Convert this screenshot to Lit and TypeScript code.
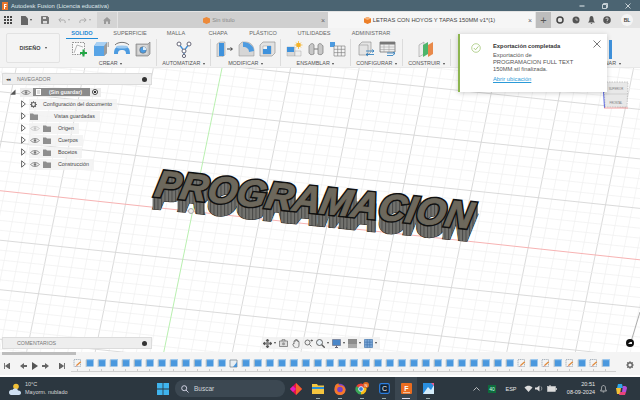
import { LitElement, html, css, svg } from "lit";
import { customElement } from "lit/decorators.js";

const S = (w: number, h: number, body: unknown) =>
  html`<svg class="ic" width=${w} height=${h} viewBox="0 0 ${w} ${h}">${body}</svg>`;

const eye = (on = true) =>
  S(10, 7, svg`<path d="M.7 3.500C2.500 1 7.500 1 9.300 3.500 7.500 6 2.500 6 .7 3.500Z" fill="none" stroke=${on ? "#777" : "#c4c4c4"} stroke-width=".9"/><circle cx="5" cy="3.500" r="1.300" fill=${on ? "#777" : "#c4c4c4"}/>`);
const folder = () =>
  S(8, 7, svg`<path d="M0 .5h3l1 1h4v5.500H0Z" fill="#8f8f8f"/>`);
const gear = (size = 8, c = "#666") =>
  S(size, size, svg`<g transform="scale(${size / 8})"><circle cx="4" cy="4" r="2.300" fill="none" stroke=${c} stroke-width="1.400"/><path d="M4 .2v1.300M4 6.500v1.300M.2 4h1.300M6.500 4h1.300M1.300 1.300l1 1M5.700 5.700l1 1M6.700 1.300l-1 1M2.300 5.700l-1 1" stroke=${c} stroke-width="1.200"/></g>`);
const tri = () =>
  S(5, 8, svg`<path d="M.6.8 4.300 4 .6 7.200Z" fill="#fff" stroke="#444" stroke-width=".8"/>`);

const cube = () =>
  S(9, 10, svg`<path d="M2 1h6.500v7.500H2Z" fill="#4a98de"/><path d="M.7 2 2 1v7.500L.7 9.200Z" fill="#a9bccb"/><path d="M2 1h6.500V2.200H2Z" fill="#9cc8ee"/>`);
const whiteCube = () =>
  S(9, 10, svg`<path d="M1 2h7v7H1Z" fill="#e8eef3" stroke="#7d8a94" stroke-width=".8"/><path d="M4 9 8 4v5Z" fill="#4a94d8"/>`);
const sketchIc = () =>
  S(9, 10, svg`<path d="M1 1.500h6.500v7H1Z" fill="#f4f4f4" stroke="#8a9aa8" stroke-width=".7" stroke-dasharray="1.200 .6"/><path d="M3.500 7.500 7.800 3.800" stroke="#e08a3a" stroke-width="1.200"/><path d="M3 8.500l1-.4-.6-.6Z" fill="#d23"/>`);

const TOOL = {
  sketch: S(18, 16, svg`<path d="M1.500 1.500h12v12h-12Z" fill="#fafafa" stroke="#666" stroke-width=".7" stroke-dasharray="1.500 1"/><path d="M3 12 6 4l6 2" fill="none" stroke="#8a8a8a" stroke-width=".6"/><path d="M12.500 8.500v7M9 12h7" stroke="#22a745" stroke-width="2"/>`),
  extrude: S(16, 16, svg`<path d="M1 5 4 1h10v11l-3 3H1Z" fill="#58a4e6"/><path d="M11 15V5l3-4v11Z" fill="#9c9c9c"/><path d="M1 5h10l3-4H4Z" fill="#a8d0f3"/><path d="M15.200 1v5" stroke="#555" stroke-width=".6"/>`),
  revolve: S(18, 16, svg`<path d="M1 13c0-7 3-8 8-8s8 1 8 8h-4c0-3-1-4-4-4s-4 1-4 4Z" fill="#4d9be0"/><path d="M2 4c3-3.500 11-3.500 14 0" fill="none" stroke="#555" stroke-width=".8"/><ellipse cx="9" cy="6" rx="6" ry="1.600" fill="#9cc9ef"/>`),
  hole: S(16, 16, svg`<path d="M1 3h12l2-2v12l-2 2H1Z" fill="#bdbdbd" stroke="#777" stroke-width=".6"/><path d="M2.500 4h10v9.500h-10Z" fill="#d8d8d8"/><circle cx="8" cy="9" r="3.300" fill="#4d9be0" stroke="#666" stroke-width=".6"/><path d="M8 9h3.300A3.300 3.300 0 0 0 8 5.700Z" fill="#d8ecfa"/>`),
  auto: S(16, 17, svg`<path d="M3 3l5 7 5-7M8 10v5" stroke="#3e8fd8" stroke-width="1.300" fill="none"/><circle cx="3" cy="3" r="2" fill="#fff" stroke="#667" stroke-width="1"/><circle cx="13" cy="3" r="2" fill="#fff" stroke="#667" stroke-width="1"/><circle cx="8" cy="10" r="2" fill="#fff" stroke="#667" stroke-width="1"/><circle cx="8" cy="15" r="1.600" fill="#fff" stroke="#667" stroke-width="1"/>`),
  press: S(18, 16, svg`<path d="M1 3l3-2h5v13l-3 2H1Z" fill="#ddd" stroke="#888" stroke-width=".5"/><path d="M4 1h5v13H4Z" fill="#3f92dc" transform="translate(-1 1)"/><path d="M11 8h5M14.500 6.500 16.500 8l-2 1.500" stroke="#333" stroke-width=".9" fill="none"/>`),
  fillet: S(17, 16, svg`<path d="M1 15V4l3-3h3c6 0 9 4 9 9v5Z" fill="#d6d6d6" stroke="#888" stroke-width=".5"/><path d="M5 1c6 0 11 4 11 9l-5 1c0-3-2-5-6-5Z" fill="#4d9be0"/>`),
  shell: S(17, 16, svg`<path d="M1 4l3-3h12v11l-3 3H1Z" fill="#e2e2e2" stroke="#888" stroke-width=".6"/><path d="M4 5h8v8H4Z" fill="#f4f4f4" stroke="#888" stroke-width=".4"/><path d="M4 8h4V5h4v8H4Z" fill="#3f92dc"/>`),
  comp: S(17, 16, svg`<path d="M1 6h8v9H1Z" fill="#d8d8d8" stroke="#999" stroke-width=".4"/><path d="M1 6h7v5H1Z" fill="#3f92dc"/><path d="M9 10h6v5H9Z" fill="#eee" stroke="#999" stroke-width=".4"/><circle cx="12.500" cy="4" r="2.300" fill="#f5b32a"/><path d="M12.500 0v8M8.500 4h8M10 1.500l5 5M15 1.500l-5 5" stroke="#f5b32a" stroke-width=".7"/>`),
  joint: S(18, 16, svg`<path d="M2 5c2-3 4-3 5-1v9c-2 1-4 1-5-1ZM16 5c-2-3-4-3-5-1v9c2 1 4 1 5-1Z" fill="#c8c8c8" stroke="#777" stroke-width=".7"/><path d="M7 8h4" stroke="#777"/>`),
  table: S(17, 16, svg`<path d="M1 1h5v5H1Z" fill="#4d9be0"/><path d="M5 5h11v10H5ZM5 8.300h11M5 11.600h11M8.700 5v10M12.300 5v10" fill="#f4f4f4" stroke="#777" stroke-width=".6"/>`),
  boxarrow: S(17, 16, svg`<path d="M1 4l3-3h9v10l-3 3H1Z" fill="#e4e4e4" stroke="#888" stroke-width=".6"/><path d="M1 4h9v10" fill="none" stroke="#888" stroke-width=".5"/><path d="M8 10h8M14 8.500 16 10l-2 1.500M8 13.500h8M10 12 8 13.500 10 15" stroke="#2277bb" stroke-width=".8" fill="none"/>`),
  tablearrow: S(17, 16, svg`<path d="M1 1h15v10H1Z" fill="#eee" stroke="#666" stroke-width=".7"/><path d="M1 1h15v2.500H1Z" fill="#777"/><path d="M1 6h15M1 8.500h15M5 3v8M10 3v8" stroke="#999" stroke-width=".5"/><path d="M8 12h8M14 11 16 12.500 14 14M8 14.500h6" stroke="#2277bb" stroke-width=".8" fill="none"/>`),
  planes: S(17, 16, svg`<path d="M1 4l5-3v12l-5 3Z" fill="#ececec" stroke="#888" stroke-width=".5"/><path d="M5 4l5-3v12l-5 3Z" fill="#4cb56a"/><path d="M10 4l5-3v12l-5 3Z" fill="#e8894a"/>`),
  select: S(26, 19, svg`<path d="M23 0h3v19h-3Z" fill="#3f92dc"/>`),
};

const cells = Array.from({ length: 45 }, (_, i) =>
  i === 0 || i === 37 || i === 39 || i === 41 || i === 43 ? "s" : i === 13 ? "w" : "c"
);

const tabs: [string, number, boolean?][] = [
  ["SOLIDO", 32, true], ["SUPERFICIE", 64], ["MALLA", 28], ["CHAPA", 56],
  ["PLÁSTICO", 34], ["UTILIDADES", 68], ["ADMINISTRAR", 46],
];

const groups: [string, number, unknown[], string?][] = [
  ["CREAR", 88, [TOOL.sketch, TOOL.extrude, TOOL.revolve, TOOL.hole], "shift"],
  ["AUTOMATIZAR", 54, [TOOL.auto]],
  ["MODIFICAR", 70, [TOOL.press, TOOL.fillet, TOOL.shell]],
  ["ENSAMBLAR", 70, [TOOL.comp, TOOL.joint, TOOL.table]],
  ["CONFIGURAR", 52, [TOOL.boxarrow, TOOL.tablearrow]],
  ["CONSTRUIR", 48, [TOOL.planes]],
];

const rows: { label: string; kind: "gear" | "saved" | "eye" | "faded" }[] = [
  { label: "Configuración del documento", kind: "gear" },
  { label: "Vistas guardadas", kind: "saved" },
  { label: "Origen", kind: "faded" },
  { label: "Cuerpos", kind: "eye" },
  { label: "Bocetos", kind: "eye" },
  { label: "Construcción", kind: "eye" },
];

function gridLines() {
  const out: unknown[] = [];
  for (let n = -20; n <= 45; n++) {
    const major = n % 5 === 0;
    const x = 222 + (68.6 * n) / 5;
    if (n === 0) continue;
    out.push(svg`<line x1=${x} y1="68" x2=${x - 0.205 * 284} y2="352" stroke=${major ? "#d6d6d6" : "#efefef"} stroke-width=${major ? 0.9 : 0.7}/>`);
  }
  for (let n = -20; n <= 18; n++) {
    const major = n % 5 === 0;
    const y = 190.7 + (49.5 * n) / 5;
    if (n === 0) continue;
    out.push(svg`<line x1="0" y1=${y} x2="640" y2=${y + 0.105 * 640} stroke=${major ? "#d6d6d6" : "#efefef"} stroke-width=${major ? 0.9 : 0.7}/>`);
  }
  return out;
}

const WORD = "PROGRAMACION";
const TM = "matrix(1 0.103 -0.2 1 153.500 196)";
const wordAt = (dy: number) => `translate(0 ${dy}) ${TM}`;
const FONT = { size: 37, len: 317 };

@customElement("app-root")
export class AppRoot extends LitElement {
  static styles = css`
    :host { display: flex; flex-direction: column; width: 640px; height: 400px; overflow: hidden; background: #fff; font-family: "Liberation Sans", Arial, sans-serif; color: #555; }
    .ic { display: block; flex: none; }
    .title { flex: 0 0 11px; background: #4b6472; color: #dfe6ea; font-size: 5.900px; display: flex; align-items: center; padding-left: 2px; }
    .title .txt { margin-left: 3px; }
    .winbtns { margin-left: auto; display: flex; }
    .winbtns .ic { margin: 0 9px 0 8px; }
    .tabs { flex: 0 0 17px; background: #e4e4e4; display: flex; align-items: stretch; padding-top: 1px; box-sizing: border-box; }
    .qa { width: 97px; display: flex; align-items: center; padding-left: 4px; box-sizing: border-box; }
    .qa .ic { margin-left: 9px; }
    .qa .ic:first-child { margin-left: 0; }
    .qa .arrow { margin-left: 2px; }
    .qa .dim { border-top-color: #aaa; }
    .home { width: 20px; background: #d4d4d4; margin-right: 1px; display: flex; align-items: center; justify-content: center; }
    .tab { display: flex; align-items: center; justify-content: center; font-size: 5.800px; position: relative; gap: 2px; box-sizing: border-box; }
    .tab.off { width: 210px; background: #cfcfcf; color: #8a8a8a; padding-right: 8px; }
    .tab.on { width: 207px; background: #f6f6f6; color: #444; padding-right: 4px; }
    .tab .x { position: absolute; right: 3px; font-size: 7px; color: #666; }
    .plus { width: 15px; background: #bdbdbd; display: flex; align-items: center; justify-content: center; color: #555; font-size: 11px; margin-left: 1px; }
    .tabend { flex: 1; display: flex; align-items: center; padding-left: 5px; gap: 8px; }
    .avatar { width: 12px; height: 12px; border-radius: 50%; background: #f4f4f4; color: #444; font-size: 5px; font-weight: bold; display: flex; align-items: center; justify-content: center; margin-left: 2px; }

    .toolbar { flex: 0 0 40px; background: #f3f3f3; display: flex; box-sizing: border-box; padding-left: 6px; border-bottom: 1px solid #e8e8e8; overflow: hidden; }
    .design { flex: 0 0 54px; height: 30px; margin-top: 5px; box-sizing: border-box; border: 1px solid #e2e2e2; border-radius: 2px; display: flex; align-items: center; justify-content: center; font-size: 5.500px; font-weight: bold; color: #444; gap: 3px; background: #f4f4f4; }
    .arrow { display: inline-block; width: 0; height: 0; border-left: 1.500px solid transparent; border-right: 1.500px solid transparent; border-top: 2px solid #444; vertical-align: middle; margin-left: 1px; flex: none; }
    .toolright { margin-left: 9px; flex: none; }
    .tabrow { display: flex; height: 11px; margin-left: -3px; padding-top: 2px; box-sizing: border-box; }
    .ttab { font-size: 5.600px; text-align: center; color: #666; box-sizing: border-box; height: 9px; line-height: 6px; }
    .ttab.sel { color: #1f8ad6; font-weight: bold; border-bottom: 1px solid #1f8ad6; }
    .grouprow { display: flex; height: 29px; }
    .group { display: flex; flex-direction: column; align-items: center; box-sizing: border-box; border-right: 1px solid #dcdcdc; height: 27px; flex: none; padding-top: 1px; }
    .group.shift { padding-right: 4px; }
    .group.plain { border-right: 0; }
    .icons { display: flex; gap: 4px; height: 18px; align-items: center; }
    .glabel { font-size: 5.400px; color: #555; white-space: nowrap; margin-top: 2px; }

    .canvas { flex: 0 0 284px; position: relative; z-index: 1; background: #fff; }
    .scene { position: absolute; left: 0; top: 0; }
    .panel { position: absolute; left: 2px; width: 150px; height: 12px; background: #eeeeee; border: 1px solid #dcdcdc; box-sizing: border-box; display: flex; align-items: center; font-size: 5.300px; color: #777; padding: 0 4px 0 3px; }
    .panel.nav { top: 5px; }
    .panel.com { top: 269px; }
    .panel .lbl { margin-left: 5px; }
    .panel .dot { margin-left: auto; width: 5px; height: 5px; border-radius: 50%; background: #333; }
    .chev { font-size: 5px; color: #444; letter-spacing: -1px; width: 6px; }
    .com .lbl { margin-left: 11px; }
    .tree { position: absolute; left: 0; top: 18px; display: flex; flex-direction: column; font-size: 5.300px; color: #444; }
    .rootrow { height: 12px; display: flex; align-items: center; padding-left: 10px; }
    .rootpill { margin-left: 4px; height: 9px; width: 81px; background: #ececec; display: flex; align-items: center; box-sizing: border-box; padding-left: 1px; }
    .docbar { background: #8b8b8b; color: #f4f4f4; font-weight: bold; height: 8px; width: 57px; margin-left: 2px; display: flex; align-items: center; justify-content: center; padding-left: 8px; box-sizing: border-box; position: relative; }
    .docbar::before { content: ""; position: absolute; left: 3px; top: 1px; width: 5px; height: 6px; background: #ddd; border: .5px solid #fff; box-sizing: border-box; }
    .radio { width: 6px; height: 6px; border-radius: 50%; border: 1px solid #444; box-sizing: border-box; margin-left: 2px; background: radial-gradient(circle, #333 35%, #fff 40%); flex: none; }
    .row { height: 12px; display: flex; align-items: center; padding-left: 21px; }
    .pill { margin-left: 3px; height: 11px; display: flex; align-items: center; background: #f1f1f1cc; padding-right: 5px; }
    .pill.eye .ic:first-child { margin-left: 1px; }
    .pill.eye .ic:nth-child(2) { margin-left: 3px; }
    .pill.eye span { margin-left: 7px; }
    .pill.gear .ic { margin-left: 1px; }
    .pill.gear span { margin-left: 6px; }
    .pill.saved .ic { margin-left: 1px; }
    .pill.saved span { margin-left: 16px; }

    .notice { position: absolute; left: 458px; top: -34px; width: 149px; height: 58px; background: #fff; border-left: 2px solid #8db550; box-sizing: border-box; box-shadow: 0 1px 5px #0003; display: flex; font-size: 5.800px; color: #555; padding: 9px 6px 0 11px; line-height: 7px; }
    .notice .body { margin-left: 12px; flex: 1; }
    .notice b { display: block; color: #333; margin-bottom: 2px; }
    .notice a { display: block; color: #2a9ad8; text-decoration: underline; margin-top: 3px; }
    .notice .close { flex: none; margin-top: -3px; }
    .navbar { position: absolute; left: 262px; top: 269px; height: 12px; width: 118px; background: #f0f0f0cc; display: flex; align-items: center; padding-left: 1px; box-sizing: border-box; }
    .navbar .ic { margin-right: 1px; }
    .navbar .sp3 { width: 3px; } .navbar .sp2 { width: 2px; }
    .navbar .arrow { margin-right: 3px; }

    .timeline { flex: 0 0 23px; background: #f4f4f4; display: flex; flex-direction: column; }
    .scroll { height: 3px; width: 74px; margin-left: 2px; background: #bdbdbd; flex: none; }
    .tlmain { display: flex; flex: 1; }
    .controls { flex: 0 0 71px; padding-left: 4px; display: flex; align-items: center; gap: 4px; padding-top: 2px; box-sizing: border-box; }
    .controls .sp { width: 2px; }
    .track { display: flex; flex: none; border-bottom: 1.500px solid #d0d0d0; height: 17px; box-sizing: border-box; padding-right: 5px; }
    .cell { width: 12px; display: flex; justify-content: center; padding-top: 3px; position: relative; box-sizing: border-box; }
    .cell::after { content: ""; position: absolute; left: 6px; bottom: 0; height: 2px; width: 1px; background: #ccc; }
    .tlgear { margin-left: 10px; padding-top: 6px; flex: none; }
    .gap { flex: 0 0 2px; background: #fff; }

    .taskbar { flex: 0 0 23px; background: #2c3740; color: #e8e8e8; display: flex; align-items: center; }
    .weather { flex: 0 0 157px; display: flex; align-items: center; padding-left: 9px; box-sizing: border-box; font-size: 5.500px; line-height: 7.500px; }
    .weather div { margin-left: 4px; color: #d8d8d8; }
    .search { width: 110px; height: 17px; margin-left: 6px; border-radius: 8px; background: #3c4852; display: flex; align-items: center; padding-left: 6px; box-sizing: border-box; font-size: 6.500px; color: #cfd4d8; gap: 5px; }
    .slot { width: 22px; height: 23px; display: flex; align-items: center; justify-content: center; position: relative; flex: none; }
    .slot.run::after { content: ""; position: absolute; bottom: 1px; left: 9px; width: 4px; height: 1px; background: #9aa; }
    .slot.active { background: #3a4650; }
    .slot.active::after { content: ""; position: absolute; bottom: 1px; left: 7px; width: 8px; height: 1px; background: #dde; }
    .apps { display: flex; }
    .tray { margin-left: 29px; display: flex; align-items: center; font-size: 5.500px; }
    .t { display: flex; justify-content: center; align-items: center; flex: none; }
    .t16 { width: 16px; } .t22 { width: 22px; } .t12 { width: 12px; } .t10 { width: 10px; }
    .green { background: #0e6b3c; color: #cfe; font-size: 5px; padding: 1px 1px; }
    .clock { width: 37px; text-align: right; padding-right: 2px; box-sizing: border-box; line-height: 7.500px; white-space: nowrap; }
    .bell { width: 12px; } .cop { margin-left: 6px; }
  `;

  private word(dy: number, fill: string, sw: number) {
    return svg`<text transform=${wordAt(dy)} font-family="Liberation Sans" font-weight="bold" font-style="italic" font-size=${FONT.size} textLength=${FONT.len} lengthAdjust="spacingAndGlyphs" fill=${fill} stroke=${fill} stroke-width=${sw}>${WORD}</text>`;
  }

  render() {
    return html`
      <div class="title">
        ${S(6, 8, svg`<path d="M0 0h6v8H0Z" fill="#e8762c"/><path d="M2 2h2.500v1H3v1h1.300v1H3v2H2Z" fill="#fff"/>`)}
        <span class="txt">Autodesk Fusion (Licencia educativa)</span>
        <div class="winbtns">
          ${S(6, 6, svg`<path d="M.5 3h5" stroke="#e6ecef"/>`)}
          ${S(6, 6, svg`<path d="M.5 1.500h4v4h-4ZM1.500 1.500V.5h4v4h-1" fill="none" stroke="#e6ecef" stroke-width=".8"/>`)}
          ${S(6, 6, svg`<path d="M.5.5l5 5M5.500.5l-5 5" stroke="#e6ecef" stroke-width=".8"/>`)}
        </div>
      </div>
      <div class="tabs">
        <div class="qa">
          ${S(8, 8, svg`<path d="M0 0h2v2H0ZM3 0h2v2H3ZM6 0h2v2H6ZM0 3h2v2H0ZM3 3h2v2H3ZM6 3h2v2H6ZM0 6h2v2H0ZM3 6h2v2H3ZM6 6h2v2H6Z" fill="#444"/>`)}
          ${S(7, 9, svg`<path d="M0 0h4.500L7 2.500V9H0Z" fill="#666"/>`)}
          <span class="arrow"></span>
          ${S(8, 8, svg`<path d="M.5.5h6l1 1v6h-7Z" fill="#777" stroke="#555" stroke-width=".6"/><path d="M2 1h3v2H2ZM2 5h4v2.500H2Z" fill="#ddd"/>`)}
          ${S(8, 7, svg`<path d="M3 .8.8 3 3 5.200M1 3h4.500c1.500 0 2 1.500 1.500 3" fill="none" stroke="#aaa" stroke-width="1"/>`)}
          <span class="arrow dim"></span>
          ${S(8, 7, svg`<path d="M5 .8 7.200 3 5 5.200M7 3H2.500C1 3 .5 4.500 1 6" fill="none" stroke="#aaa" stroke-width="1"/>`)}
          <span class="arrow dim"></span>
        </div>
        <div class="home">${S(8, 7, svg`<path d="M0 3.500 4 0l4 3.500H7V7H5V4.500H3V7H1V3.500Z" fill="#9a9a9a"/>`)}</div>
        <div class="tab off">
          ${S(7, 7, svg`<path d="M3.500 0 7 1.500v4L3.500 7 0 5.500v-4Z" fill="#ec8a3a"/>`)}
          <span>Sin título</span><span class="x">×</span>
        </div>
        <div class="tab on">
          ${S(7, 7, svg`<path d="M3.500 0 7 1.500v4L3.500 7 0 5.500v-4Z" fill="#ec7f28"/><path d="M0 1.500 3.500 3 7 1.500 3.500 0Z" fill="#f6b27a"/>`)}
          <span>LETRAS CON HOYOS Y TAPAS 150MM v1*(1)</span><span class="x">×</span>
        </div>
        <div class="plus">+</div>
        <div class="tabend">
          ${S(8, 8, svg`<circle cx="4" cy="4" r="3" fill="none" stroke="#444" stroke-width="1.500"/>`)}
          ${S(8, 8, svg`<circle cx="4" cy="4" r="3.500" fill="#555"/><path d="M4 2v2h2" stroke="#ddd" stroke-width=".7" fill="none"/>`)}
          ${S(7, 8, svg`<path d="M3.500 0C5 0 5.500 1.500 5.500 3c0 1.500.5 2.500 1.500 3.500H0C1 5.500 1.500 4.500 1.500 3 1.500 1.500 2 0 3.500 0ZM2.500 7h2l-1 1Z" fill="#555"/>`)}
          ${S(8, 8, svg`<circle cx="4" cy="4" r="3.800" fill="#555"/><path d="M2.800 3c0-1.500 2.400-1.500 2.400 0 0 1-1.200 1-1.200 2M4 5.800v.8" stroke="#eee" stroke-width=".8" fill="none"/>`)}
          <div class="avatar">BL</div>
        </div>
      </div>
      <div class="toolbar">
        <div class="design">DISEÑO <span class="arrow"></span></div>
        <div class="toolright">
          <div class="tabrow">
            ${tabs.map(([t, w, sel]) => html`<div class="ttab ${sel ? "sel" : ""}" style="width:${w}px">${t}</div>`)}
          </div>
          <div class="grouprow">
            ${groups.map(([l, w, ics, cls]) => html`
              <div class="group ${cls ?? ""}" style="width:${w}px">
                <div class="icons">${ics}</div>
                <div class="glabel">${l} <span class="arrow"></span></div>
              </div>`)}
            <div class="group plain" style="width:112px"></div>
            <div class="group plain" style="width:72px">
              <div class="icons">${TOOL.select}</div>
              <div class="glabel">SELECCIONAR <span class="arrow"></span></div>
            </div>
          </div>
        </div>
      </div>
      <div class="canvas">
        <svg class="scene" width="640" height="284" viewBox="0 68 640 284">
          <defs>
            <pattern id="st" width="3.500" height="8" patternUnits="userSpaceOnUse">
              <rect width="3.500" height="8" fill="#72726e"/><rect width="1" height="8" fill="#4a4a48"/>
            </pattern>
            <mask id="ext" maskUnits="userSpaceOnUse" x="130" y="150" width="370" height="110">
              ${Array.from({ length: 12 }, (_, i) => this.word(i + 1, "#fff", 2.4))}
            </mask>
          </defs>
          ${gridLines()}
          <line x1="222" y1="68" x2="163.800" y2="352" stroke="#b9f0b0" stroke-width="1"/>
          <line x1="0" y1="190.700" x2="640" y2="259.800" stroke="#f7b3b3" stroke-width="1"/>
          <circle cx="191" cy="211" r="2.500" fill="#eee" stroke="#aaa" stroke-width="1"/>
          ${this.word(12, "#222", 3.2)}
          <rect x="130" y="150" width="370" height="110" fill="url(#st)" mask="url(#ext)"/>
          ${this.word(0, "#111", 3.8)}
          ${this.word(0, "#6d685c", 0.9)}
          <path d="M604 82h24l-1 25h-22Z" fill="#e8e8e8" stroke="#aaa" stroke-width=".6" stroke-dasharray="1.500 1"/>
          <path d="M604.500 94h23" stroke="#bbb" stroke-width=".5"/>
          <text x="616" y="90" font-size="2.800" text-anchor="middle" fill="#777" font-family="Liberation Sans">SUPERIOR</text>
          <text x="616" y="104" font-size="2.800" text-anchor="middle" fill="#777" font-family="Liberation Sans">FRONTAL</text>
          <path d="M603.500 92l1 16" stroke="#3344dd" stroke-width=".8" fill="none"/>
          <path d="M604 108h24" stroke="#f08a8a" stroke-width=".8"/>
          <path d="M640 312 630 345" stroke="#999" stroke-width=".8"/>
          <circle cx="630" cy="343" r="4" fill="#111"/>
          <path d="M628 344l2-2h2v2Z" fill="#eee"/>
        </svg>
        <div class="panel nav"><span class="chev">◂◂</span><span class="lbl">NAVEGADOR</span><span class="dot"></span></div>
        <div class="tree">
          <div class="rootrow">
            ${S(6, 6, svg`<path d="M.3 5.700 5.500.5v5.200Z" fill="#555"/>`)}
            <div class="rootpill">
              ${eye(true)}
              <div class="docbar">(Sin guardar)</div>
              <span class="radio"></span>
            </div>
          </div>
          ${rows.map((r) => html`
            <div class="row">
              ${tri()}
              <div class="pill ${r.kind === "gear" ? "gear" : r.kind === "saved" ? "saved" : "eye"}">
                ${r.kind === "gear" ? gear(7, "#666") : r.kind === "saved" ? folder() : html`${eye(r.kind === "eye")}${folder()}`}
                <span>${r.label}</span>
              </div>
            </div>`)}
        </div>
        <div class="panel com"><span class="lbl">COMENTARIOS</span><span class="dot"></span></div>
        <div class="navbar">
          ${S(9, 9, svg`<path d="M4.500 0v9M0 4.500h9M4.500 0 3 2h3ZM4.500 9 3 7h3ZM0 4.500 2 3v3ZM9 4.500 7 3v3Z" stroke="#555" stroke-width=".8" fill="#555"/><circle cx="4.500" cy="4.500" r="1.800" fill="#888"/>`)}
          <span class="arrow"></span>
          ${S(9, 8, svg`<path d="M.5 2h8v5.500h-8Z" fill="#ddd" stroke="#666" stroke-width=".7"/><path d="M3 2V.7h3V2" fill="none" stroke="#666" stroke-width=".7"/><circle cx="4.500" cy="4.700" r="1.500" fill="#999"/>`)}
          <span class="sp3"></span>
          ${S(9, 9, svg`<path d="M2 4V2.500c0-1 1-1 1 0V1.500c0-1 1-1 1 0V1c0-1 1-1 1 0v1c0-1 1-1 1 0v1c0-1 1-1 1 0v3c0 2-1 3-2.500 3S2 8 1 6c-.5-1 .5-2 1-1Z" fill="#eee" stroke="#555" stroke-width=".7"/>`)}
          <span class="sp3"></span>
          ${S(9, 8, svg`<circle cx="3.500" cy="3.500" r="2.500" fill="#eee" stroke="#555" stroke-width=".8"/><path d="M5.500 5.500l2 2M6.500 1.500h2.500M7.700.5v2" stroke="#555" stroke-width=".8"/>`)}
          <span class="sp2"></span>
          ${S(9, 9, svg`<circle cx="3.500" cy="3.500" r="3" fill="#eaf2f8" stroke="#555" stroke-width=".9"/><path d="M5.800 5.800 8.700 8.700" stroke="#555" stroke-width="1.300"/>`)}
          <span class="arrow"></span>
          ${S(9, 9, svg`<path d="M.5.5h8v6h-8Z" fill="#4a86c8" stroke="#667" stroke-width=".6"/><path d="M3 8.500h3M4.500 6.500v2" stroke="#667"/>`)}
          <span class="arrow"></span>
          ${S(9, 9, svg`<rect width="9" height="9" fill="#8c8c8c"/><rect y="5" width="9" height="4" fill="#a8a8a8"/>`)}
          <span class="arrow"></span>
          ${S(9, 9, svg`<path d="M.5.5h8v8h-8ZM3.200.5v8M5.800.5v8M.5 3.200h8M.5 5.800h8" fill="#7ea9d8" stroke="#3a6ea8" stroke-width=".6"/>`)}
          <span class="arrow"></span>
        </div>
        <div class="notice">
          ${S(10, 10, svg`<circle cx="5" cy="5" r="4.300" fill="none" stroke="#9bc26a" stroke-width=".7"/><path d="M2.800 5 4.500 6.800 7.400 3.400" fill="none" stroke="#9bc26a" stroke-width=".8"/>`)}
          <div class="body">
            <b>Exportación completada</b>
            Exportación de<br />PROGRAMACION FULL TEXT<br />150MM.stl finalizada.
            <a>Abrir ubicación</a>
          </div>
          <span class="close">${S(8, 8, svg`<path d="M.5.500l7 7M7.500.500l-7 7" stroke="#555" stroke-width=".8"/>`)}</span>
        </div>
      </div>
      <div class="timeline">
        <div class="scroll"></div>
        <div class="tlmain">
          <div class="controls">
            ${S(6, 6, svg`<path d="M.5 0v6M6 0v6L1.500 3Z" stroke="#555" stroke-width=".8" fill="#666"/>`)}
            <span class="sp"></span>
            ${S(7, 6, svg`<path d="M4 0v6L0 3ZM4 2h3v2H4Z" fill="#666"/>`)}
            ${S(7, 8, svg`<path d="M1 0v8l6-4Z" fill="#555"/>`)}
            ${S(7, 6, svg`<path d="M3 0v6l4-3ZM0 2h3v2H0Z" fill="#666"/>`)}
            <span class="sp"></span>
            ${S(6, 6, svg`<path d="M5.500 0v6M0 0v6l4.500-3Z" stroke="#555" stroke-width=".8" fill="#666"/>`)}
          </div>
          <div class="track">
            ${cells.map((c) => html`<div class="cell">${c === "s" ? sketchIc() : c === "w" ? whiteCube() : cube()}</div>`)}
          </div>
          <div class="tlgear">${gear(8, "#666")}</div>
        </div>
      </div>
      <div class="gap"></div>
      <div class="taskbar">
        <div class="weather">
          ${S(12, 12, svg`<circle cx="7" cy="3.500" r="2.800" fill="#f2c037"/><path d="M0 9.500C0 7.500 2 6.500 3.500 7c.8-2 5-2 5.500.5 2-.2 3 1 3 2.500 0 1-1 2-2 2H2c-1 0-2-1-2-2.500Z" fill="#cfe0f2"/>`)}
          <div>10°C<br />Mayorm. nublado</div>
        </div>
        ${S(12, 12, svg`<path d="M0 0H5.600V5.600H0ZM6.400 0H12V5.600H6.400ZM0 6.400h5.600V12H0ZM6.400 6.400H12V12H6.400Z" fill="#3fb4ee"/>`)}
        <div class="search">
          ${S(8, 8, svg`<circle cx="3.200" cy="3.200" r="2.500" fill="none" stroke="#dde" stroke-width=".9"/><path d="M5 5l2.500 2.500" stroke="#dde" stroke-width=".9"/>`)}
          <span>Buscar</span>
        </div>
        <div class="apps">
          <div class="slot">${S(12, 12, svg`<path d="M6 0 12 6 6 12 0 6Z" fill="#e8104a"/><path d="M6 0 12 6 6 12Z" fill="#f0682a"/><path d="M3 3 6 6 3 9 0 6Z" fill="#e020c0"/>`)}</div>
          <div class="slot run">${S(12, 11, svg`<path d="M0 1h5l1 1.500h6V11H0Z" fill="#f4c53f"/><path d="M0 4h12v2H0Z" fill="#2a8fd8"/>`)}</div>
          <div class="slot run">${S(12, 12, svg`<circle cx="6" cy="6.300" r="5.500" fill="#7a3fc8"/><path d="M1 3C2 .5 5 .5 5 .5 4 1.500 5 2.500 6.500 2.500c3 0 5 2 5 4.500 0 3-2.500 5-5.500 5S.5 10 .5 7C.5 5.500.7 4 1 3Z" fill="#f5792a"/><circle cx="6" cy="6.500" r="2.800" fill="#7a3fc8"/>`)}</div>
          <div class="slot run">${S(15, 13, svg`<path d="M6 1.400A5.600 5.600 0 0 1 10.850 4.200L6 7 1.150 4.200A5.600 5.600 0 0 1 6 1.400Z" fill="#e94235"/><path d="M1.150 4.200A5.600 5.600 0 0 0 6 12.600V7Z" fill="#3aa757"/><path d="M10.850 4.200A5.600 5.600 0 0 1 6 12.600V7Z" fill="#f9bc15"/><circle cx="6" cy="7" r="2.400" fill="#3a7bd5" stroke="#fff" stroke-width=".8"/><circle cx="11" cy="3" r="3" fill="#e0661c"/><text x="11" y="4.500" font-size="4" fill="#fff" text-anchor="middle" font-family="Liberation Sans">N</text>`)}</div>
          <div class="slot run">${S(11, 11, svg`<rect x=".7" y=".7" width="9.600" height="9.600" rx="1.500" fill="#123" stroke="#2d7fe0" stroke-width="1.200"/><text x="5.500" y="8" font-size="7" fill="#fff" text-anchor="middle" font-family="Liberation Sans">C</text>`)}</div>
          <div class="slot active">${S(11, 11, svg`<rect width="11" height="11" rx="1" fill="#ea6c1f"/><text x="5.500" y="7.500" font-size="7" font-weight="bold" fill="#fff" text-anchor="middle" font-family="Liberation Sans">F</text><rect x="2" y="9" width="7" height="1.200" fill="#f5c09a"/>`)}</div>
          <div class="slot run">${S(11, 11, svg`<rect width="11" height="11" fill="#2a8fe0"/><path d="M0 11 5 4 8 7 11 2v9Z" fill="#d5ecfa"/><path d="M8 0h3v3Z" fill="#f05a8a"/>`)}</div>
        </div>
        <div class="tray">
          <div class="t t16">${S(7, 4, svg`<path d="M.5 3.500 3.500.5l3 3" fill="none" stroke="#ddd" stroke-width=".8"/>`)}</div>
          <div class="t t16"><span class="green">40</span></div>
          <div class="t t22">ESP</div>
          <div class="t t12">${S(9, 7, svg`<path d="M.5 2.500C3 0 6 0 8.500 2.500L4.500 7Z" fill="#ddd"/>`)}</div>
          <div class="t t10">${S(8, 7, svg`<path d="M0 2.500h2L4.500 .5v6L2 4.500H0Z" fill="#ddd"/><path d="M6 1.500c1 1 1 3 0 4" fill="none" stroke="#ddd" stroke-width=".6"/>`)}</div>
          <div class="t t16">${S(10, 7, svg`<rect x=".5" y="1.500" width="8" height="5" fill="#ddd" stroke="#ddd" stroke-width=".5"/><rect x="8.800" y="3" width="1" height="2" fill="#ddd"/><path d="M3 0v2" stroke="#ddd"/>`)}</div>
          <div class="clock"><div>20:51</div><div>08-09-2024</div></div>
          <div class="t bell">${S(7, 8, svg`<path d="M3.500.5C5 .5 5.500 2 5.500 3.500c0 1.300.5 2 1 2.500H.5c.5-.5 1-1.200 1-2.500C1.500 2 2 .5 3.500.5ZM2.700 7h1.600" fill="none" stroke="#ddd" stroke-width=".7"/>`)}</div>
          <div class="t cop">${S(12, 12, svg`<path d="M3 1h4l1 4H2Z" fill="#2fa6e8"/><path d="M8 3h2c1 0 2 1 2 2l-1 4H7Z" fill="#b34fd8"/><path d="M1 5h5l-1 6H2Z" fill="#f2c037"/><path d="M5 9h6l-1 3H4Z" fill="#e8447a"/>`)}</div>
        </div>
      </div>
    `;
  }
}
